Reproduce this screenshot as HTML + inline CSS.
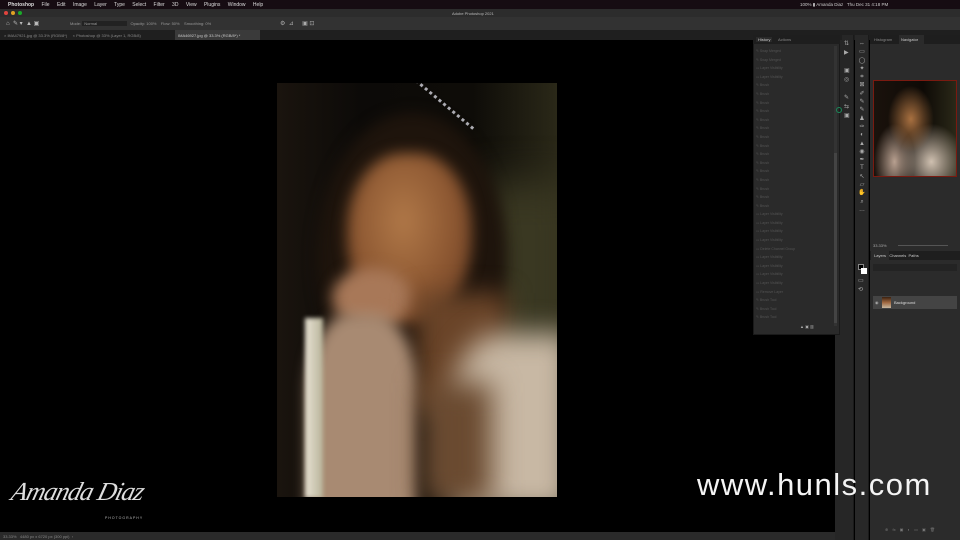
<!DOCTYPE html>
<html><head><meta charset="utf-8"><style>
*{margin:0;padding:0;box-sizing:border-box}
body{width:960px;height:540px;overflow:hidden;background:#000;font-family:"Liberation Sans",sans-serif;position:relative}
.a{position:absolute}
.t{font-size:4px;color:#888;white-space:nowrap}
.b{filter:blur(7px)}
</style></head><body>
<!-- menu bar -->
<div class="a" style="left:0;top:0;width:960px;height:9px;background:#160c12"></div>
<div class="a t" style="left:8px;top:2px;color:#ddd;font-size:5px;word-spacing:6px"> <b>Photoshop</b> File Edit Image Layer Type Select Filter 3D View Plugins Window Help</div>
<div class="a t" style="left:800px;top:2px;color:#ccc;font-size:4.5px">100% ▮ Amanda Diaz &nbsp; Thu Dec 31 4:18 PM</div>
<!-- title bar -->
<div class="a" style="left:0;top:9px;width:960px;height:8px;background:#2c2c2c"></div>
<div class="a" style="left:4px;top:11px;width:4px;height:4px;border-radius:50%;background:#e0443e"></div>
<div class="a" style="left:11px;top:11px;width:4px;height:4px;border-radius:50%;background:#dea123"></div>
<div class="a" style="left:18px;top:11px;width:4px;height:4px;border-radius:50%;background:#1aab29"></div>
<div class="a t" style="left:452px;top:11px;color:#bbb">Adobe Photoshop 2021</div>
<!-- options bar -->
<div class="a" style="left:0;top:17px;width:960px;height:13px;background:#323232"></div>
<div class="a t" style="left:6px;top:20px;color:#bbb;font-size:6px">⌂ &nbsp;✎ ▾ &nbsp;▲ ▣</div>
<div class="a t" style="left:70px;top:21px;color:#999">Mode: <span style="background:#222;padding:0 30px 0 2px">Normal</span> &nbsp; Opacity: 100% &nbsp;&nbsp; Flow: 50% &nbsp;&nbsp; Smoothing: 0%</div>
<div class="a t" style="left:280px;top:20px;color:#aaa;font-size:6px">⚙ &nbsp;⊿ &nbsp;&nbsp;&nbsp; ▣ ⊡</div>
<!-- tabs -->
<div class="a" style="left:0;top:30px;width:960px;height:10px;background:#1f1f1f"></div>
<div class="a t" style="left:4px;top:33px">× IMA47921.jpg @ 33.3% (RGB/8*) &nbsp;&nbsp;&nbsp; × Photoshop @ 33% (Layer 1, RGB/8)</div>
<div class="a" style="left:175px;top:30px;width:85px;height:10px;background:#3a3a3a"></div>
<div class="a t" style="left:178px;top:33px;color:#ccc">IMA46927.jpg @ 33.3% (RGB/8*) *</div>
<!-- photo -->
<div class="a" style="left:277px;top:83px;width:280px;height:414px;overflow:hidden;background:linear-gradient(90deg,#1a140e 0%,#0c0a08 30%,#0e0c08 70%,#2a2818 100%)">
 <div class="a b" style="left:200px;top:100px;width:100px;height:200px;background:#3a3822;filter:blur(20px)"></div>
 <div class="a b" style="left:40px;top:30px;width:190px;height:290px;border-radius:50%;background:#1e140c"></div>
 <div class="a b" style="left:70px;top:70px;width:125px;height:170px;border-radius:45% 45% 50% 50%;background:radial-gradient(ellipse at 45% 40%,#b07848 0%,#8a5530 55%,#5a3520 100%)"></div>
 <div class="a b" style="left:55px;top:185px;width:80px;height:60px;border-radius:50%;background:#a87858"></div>
 <div class="a b" style="left:140px;top:210px;width:90px;height:120px;background:#6a4428;filter:blur(12px)"></div>
 <div class="a b" style="left:30px;top:230px;width:110px;height:200px;border-radius:40% 40% 0 0;background:#a88a72"></div>
 <div class="a" style="left:28px;top:235px;width:18px;height:180px;background:linear-gradient(90deg,#e8e2d4,#b8b49a);filter:blur(2px)"></div>
 <div class="a b" style="left:175px;top:250px;width:120px;height:180px;border-radius:40% 0 0 0;background:#c8b8a4;filter:blur(14px)"></div>
 <div class="a b" style="left:145px;top:300px;width:70px;height:120px;background:#6a4a30;filter:blur(14px)"></div>
 <div class="a" style="left:130px;top:20px;width:75px;height:3px;border-top:3px dotted #c8c8d0;transform:rotate(40deg);opacity:.85"></div>
</div>
<!-- canvas scrollbar -->
<div class="a" style="left:835px;top:40px;width:7px;height:500px;background:#262626"></div>
<!-- history panel -->
<div class="a" style="left:753px;top:35px;width:87px;height:300px;background:#2a2a2a;border:1px solid #1a1a1a"></div>
<div class="a" style="left:753px;top:35px;width:87px;height:9px;background:#1e1e1e"></div>
<div class="a t" style="left:756px;top:37px;color:#ccc;background:#2a2a2a;padding:0 2px">History</div>
<div class="a t" style="left:778px;top:37px">Actions</div>
<div class="a" style="left:834px;top:46px;width:3px;height:280px;background:#333"></div>
<div class="a" style="left:834px;top:153px;width:3px;height:170px;background:#444"></div>
<div class="a" style="left:756px;top:47px;width:76px;line-height:8.6px;font-size:3.5px;color:#555">
✎ Snap Merged<br>✎ Snap Merged<br>▭ Layer Visibility<br>▭ Layer Visibility<br>✎ Brush<br>✎ Brush<br>✎ Brush<br>✎ Brush<br>✎ Brush<br>✎ Brush<br>✎ Brush<br>✎ Brush<br>✎ Brush<br>✎ Brush<br>✎ Brush<br>✎ Brush<br>✎ Brush<br>✎ Brush<br>✎ Brush<br>▭ Layer Visibility<br>▭ Layer Visibility<br>▭ Layer Visibility<br>▭ Layer Visibility<br>▭ Delete Channel Group<br>▭ Layer Visibility<br>▭ Layer Visibility<br>▭ Layer Visibility<br>▭ Layer Visibility<br>▭ Remove Layer<br>✎ Brush Tool<br>✎ Brush Tool<br>✎ Brush Tool</div>
<div class="a t" style="left:800px;top:324px;color:#aaa">▲ ▣ ▥</div>
<div class="a" style="left:836px;top:107px;width:6px;height:6px;border-radius:50%;border:1px solid #1a8a5a"></div>
<!-- icon strip + toolbar -->
<div class="a" style="left:842px;top:35px;width:12px;height:505px;background:#262626;border-right:1px solid #1a1a1a"></div>
<div class="a t" style="left:844px;top:40px;color:#aaa;font-size:6px;line-height:9px">⇅<br>▶<br><br>▣<br>◎<br><br>✎<br>⇆<br>▣</div>
<div class="a" style="left:855px;top:35px;width:14px;height:505px;background:#282828;border-right:1px solid #1a1a1a"></div>
<div class="a" style="left:857px;top:40px;width:10px;height:260px;font-size:6px;line-height:8.3px;color:#aaa;text-align:center">⇔<br>▭<br>◯<br>✦<br>⌗<br>⊠<br>✐<br>✎<br>✎<br>♟<br>✑<br>◐<br>▲<br>◉<br>✒<br>T<br>↖<br>▱<br>✋<br>⌕<br>…</div>
<div class="a" style="left:858px;top:264px;width:6px;height:6px;background:#000;border:1px solid #888"></div>
<div class="a" style="left:861px;top:268px;width:6px;height:6px;background:#fff"></div>
<div class="a t" style="left:858px;top:277px;color:#aaa;font-size:6px;line-height:9px">▭<br>⟲</div>
<!-- right panels -->
<div class="a" style="left:870px;top:35px;width:90px;height:505px;background:#2b2b2b"></div>
<div class="a" style="left:870px;top:35px;width:90px;height:9px;background:#1e1e1e"></div>
<div class="a t" style="left:874px;top:37px">Histogram</div>
<div class="a" style="left:899px;top:35px;width:25px;height:9px;background:#2b2b2b"></div>
<div class="a t" style="left:901px;top:37px;color:#ccc">Navigator</div>
<div class="a" style="left:873px;top:80px;width:84px;height:97px;border:1px solid #7a1a10;background:radial-gradient(ellipse 28% 35% at 45% 40%,#a87040,transparent),radial-gradient(ellipse 40% 40% at 70% 85%,#cfc0b0,transparent),radial-gradient(ellipse 25% 40% at 25% 85%,#b8a090,transparent),linear-gradient(90deg,#1a120c,#0e0a06 60%,#2a2818)"></div>
<div class="a t" style="left:873px;top:243px;color:#aaa">33.33%</div>
<div class="a" style="left:898px;top:245px;width:50px;height:1px;background:#555"></div>
<div class="a" style="left:870px;top:251px;width:90px;height:9px;background:#1e1e1e"></div>
<div class="a" style="left:871px;top:251px;width:18px;height:9px;background:#2b2b2b"></div>
<div class="a t" style="left:874px;top:253px;color:#ccc">Layers &nbsp;&nbsp;Channels &nbsp;Paths</div>
<div class="a" style="left:873px;top:264px;width:84px;height:7px;background:#232323"></div>
<div class="a" style="left:873px;top:296px;width:84px;height:13px;background:#444"></div>
<div class="a" style="left:882px;top:297px;width:9px;height:11px;background:linear-gradient(#3a2010,#a06840 50%,#c8b8a0)"></div>
<div class="a t" style="left:894px;top:300px;color:#ddd">Background</div>
<div class="a t" style="left:875px;top:300px;color:#aaa">◉</div>
<div class="a t" style="left:885px;top:527px;color:#777;word-spacing:3px">⊕ fx ▣ ◐ ▭ ▣ 🗑</div>
<!-- status bar -->
<div class="a" style="left:0;top:532px;width:835px;height:8px;background:#2a2a2a"></div>
<div class="a t" style="left:3px;top:534px">33.33% &nbsp; 4480 px x 6720 px (300 ppi) &nbsp;›</div>
<!-- logo -->
<div class="a" style="left:12px;top:477px;font-family:'Liberation Serif',serif;font-style:italic;font-size:26px;color:#ddd;transform:skewX(-15deg);letter-spacing:-1px">Amanda Diaz</div>
<div class="a" style="left:105px;top:516px;font-size:3.5px;color:#bbb;letter-spacing:1px">PHOTOGRAPHY</div>
<!-- watermark -->
<div class="a" style="left:697px;top:467px;font-size:31px;color:#f4f4f4;letter-spacing:1.5px">www.hunls.com</div>
</body></html>
